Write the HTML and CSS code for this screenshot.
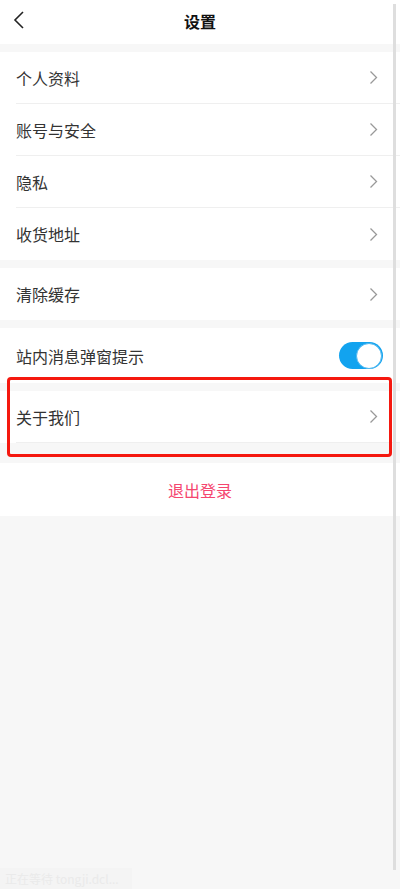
FILE: index.html
```html
<!DOCTYPE html>
<html lang="zh-CN">
<head>
<meta charset="utf-8">
<title>设置</title>
<link rel="stylesheet" href="styles.css">
</head>
<body>
<div class="page">
  <header class="header">
    <svg class="back" width="12" height="20" viewBox="0 0 12 20"><path d="M10 2 L2 10 L10 18" fill="none" stroke="#222" stroke-width="1.6"/></svg>
    <h1 class="title">设置</h1>
  </header>

  <section class="group">
    <div class="row"><span class="label">个人资料</span><svg class="chev" width="9" height="15" viewBox="0 0 9 15"><path d="M1.5 1.5 L7.5 7.5 L1.5 13.5" fill="none" stroke="#999" stroke-width="1.3"/></svg></div>
    <div class="row"><span class="label">账号与安全</span><svg class="chev" width="9" height="15" viewBox="0 0 9 15"><path d="M1.5 1.5 L7.5 7.5 L1.5 13.5" fill="none" stroke="#999" stroke-width="1.3"/></svg></div>
    <div class="row"><span class="label">隐私</span><svg class="chev" width="9" height="15" viewBox="0 0 9 15"><path d="M1.5 1.5 L7.5 7.5 L1.5 13.5" fill="none" stroke="#999" stroke-width="1.3"/></svg></div>
    <div class="row"><span class="label">收货地址</span><svg class="chev" width="9" height="15" viewBox="0 0 9 15"><path d="M1.5 1.5 L7.5 7.5 L1.5 13.5" fill="none" stroke="#999" stroke-width="1.3"/></svg></div>
  </section>

  <section class="group">
    <div class="row"><span class="label">清除缓存</span><svg class="chev" width="9" height="15" viewBox="0 0 9 15"><path d="M1.5 1.5 L7.5 7.5 L1.5 13.5" fill="none" stroke="#999" stroke-width="1.3"/></svg></div>
  </section>

  <section class="group">
    <div class="row row-switch"><span class="label">站内消息弹窗提示</span><span class="switch"><span class="knob"></span></span></div>
  </section>

  <section class="group">
    <div class="row row-bordered"><span class="label">关于我们</span><svg class="chev" width="9" height="15" viewBox="0 0 9 15"><path d="M1.5 1.5 L7.5 7.5 L1.5 13.5" fill="none" stroke="#999" stroke-width="1.3"/></svg></div>
  </section>

  <section class="group group-logout">
    <div class="logout">退出登录</div>
  </section>

  <div class="highlight"></div>
  <div class="scrollbar"></div>
  <div class="status">正在等待 tongji.dcl...</div>
</div>
</body>
</html>
```

FILE: styles.css
```css
* { box-sizing: border-box; }
html, body { margin: 0; padding: 0; }
body {
  background: #f7f7f7;
  font-family: "Noto Sans CJK SC", "Noto Sans", sans-serif;
  color: #333;
}
.page {
  position: relative;
  min-height: 889px;
  background: #f7f7f7;
}
.header {
  height: 44px;
  background: #fff;
  display: flex;
  align-items: center;
  justify-content: center;
  position: relative;
}
.back {
  position: absolute;
  left: 13px;
  top: 10px;
}
.title {
  margin: 0 0 2px;
  font-size: 16px;
  font-weight: 700;
  color: #111;
  line-height: 1;
}
.group {
  background: #fff;
  margin-top: 8px;
}
.row {
  height: 52px;
  margin-left: 16px;
  padding-right: 22px;
  display: flex;
  align-items: center;
  justify-content: space-between;
  border-bottom: 1px solid #efefef;
}
.group .row:last-child { border-bottom: none; }
.group .row.row-bordered { border-bottom: 1px solid #efefef; }
.row-switch {
  height: 55px;
  padding-right: 17px;
}
.label {
  font-size: 16px;
  line-height: 1;
  color: #333;
}
.chev { display: block; }
.switch {
  width: 44px;
  height: 27px;
  border-radius: 14px;
  background: #12a3ef;
  display: flex;
  align-items: center;
  justify-content: flex-end;
  padding-right: 1px;
}
.knob {
  width: 26px;
  height: 26px;
  border-radius: 50%;
  background: #fff;
  border: 1px solid #4fb7f0;
}
.group-logout {
  margin-top: 20px;
  height: 53px;
  display: flex;
  align-items: center;
  justify-content: center;
}
.logout {
  font-size: 16px;
  color: #f5466f;
  line-height: 1;
}
.highlight {
  position: absolute;
  left: 7px;
  top: 377px;
  width: 385px;
  height: 80px;
  border: 3px solid #f5180f;
  border-radius: 4px;
}
.scrollbar {
  position: absolute;
  left: 393px;
  top: 4px;
  width: 3px;
  height: 866px;
  background: #dedede;
}
.status {
  position: fixed;
  left: 0;
  bottom: 0;
  width: 132px;
  height: 21px;
  padding-left: 5px;
  background: #f4f4f4;
  color: #eaeaea;
  font-size: 12px;
  line-height: 21px;
  white-space: nowrap;
  overflow: hidden;
}
```
